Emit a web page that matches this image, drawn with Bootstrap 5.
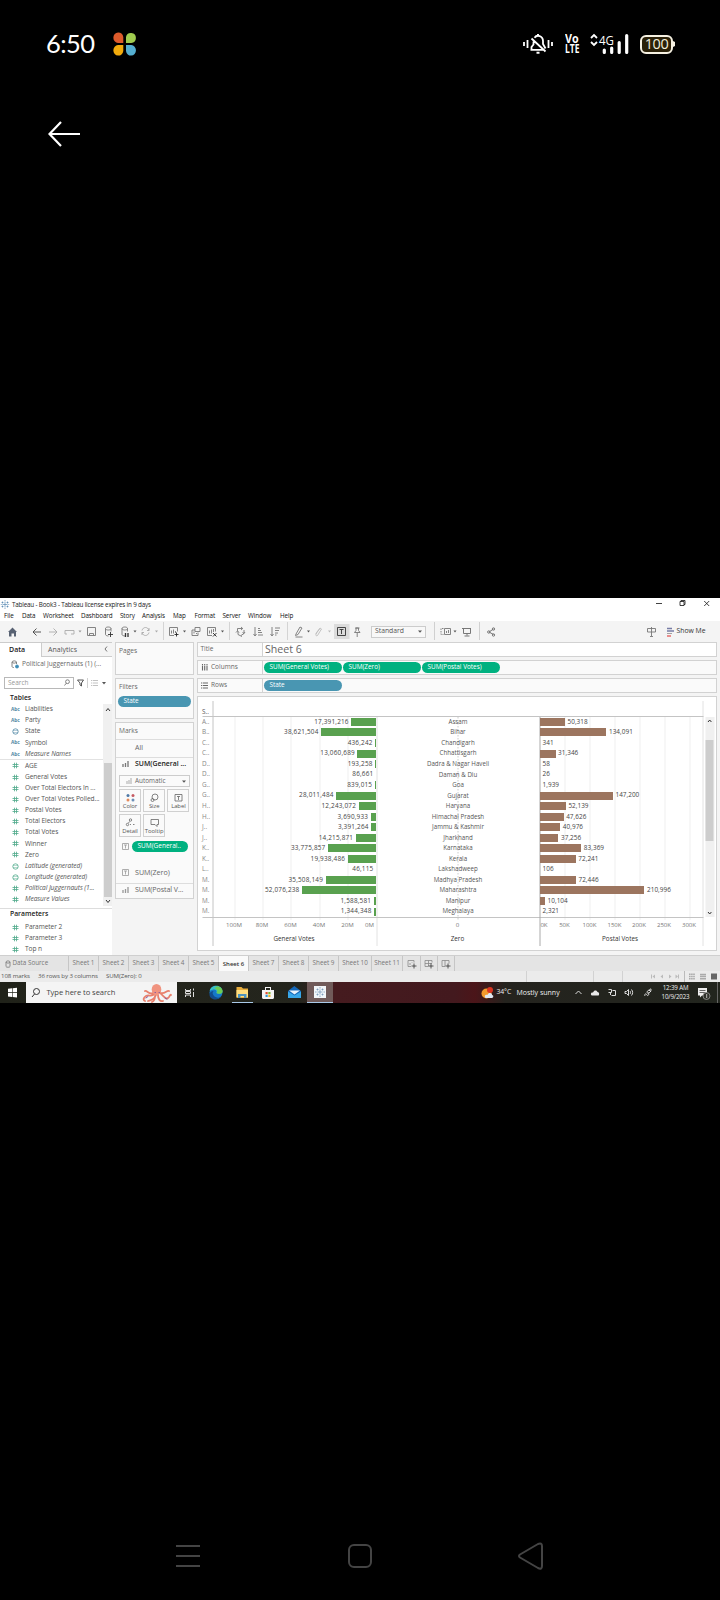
<!DOCTYPE html>
<html lang="en">
<head>
<meta charset="utf-8">
<meta name="viewport" content="width=device-width, initial-scale=1">
<title>Tableau - Book3</title>
<link href="https://cdn.jsdelivr.net/npm/bootstrap@5.3.0/dist/css/bootstrap.min.css" rel="stylesheet">
<style>
html,body{background:#000;margin:0}
body{width:720px;height:1600px;overflow:hidden;font-family:"Open Sans","Noto Sans",sans-serif;font-size:6.5px;line-height:1;color:#555}
svg{display:block;flex:none}
.phone{height:1600px}
.statusbar{height:88px;color:#fff;padding:0 45px 0 46px}
.clock{font:25.5px/1 Lato,sans-serif;letter-spacing:-.6px;width:67px}
.volte{font:bold 12.5px/10px "Open Sans",sans-serif;width:16px;margin-left:12px}
.volte span{display:block;transform-origin:0 50%}
.volte .vo{transform:scaleX(.86)}
.volte .lte{transform:scaleX(.68)}
.batt{width:33px;height:19px;border:2px solid #f6f1e2;border-radius:6px;background:#2a2008;font:14.5px/14px "Open Sans",sans-serif;color:#f3eddb;letter-spacing:-.5px;margin-left:10px}
.backrow{height:92px;padding-left:48px}
.photo{margin-top:418px;height:405px;background:#f4f4f4;overflow:hidden;white-space:nowrap}
.ttl{height:13px;background:#fff;color:#222;font-size:6.3px;letter-spacing:-.18px}
.ttl span{padding-top:1px}
.menus{height:10px;background:#fff;color:#111;font-size:6.3px;display:grid;align-items:center;padding-left:4px;grid-template-columns:18px 21px 38px 39px 22px 31px 21.5px 28px 25.5px 32px 20px;letter-spacing:-.1px}
.tools{height:21px}
.std{width:55px;height:12px;border:1px solid #ccc;background:#f8f8f8;padding:0 3px;font-size:6.8px}
.bodyrow{height:313px}
.side{width:112px;background:#fff;color:#555;font-size:6.6px}
.sidetabs{height:15px;font-size:7px}
.tab-a{width:41px;font-weight:600;color:#222;padding-left:9px;padding-bottom:1px;border-top:1px solid #ccc}
.tab-b{flex:1;background:#f4f4f4;border:1px solid #ccc;border-right:0;padding:0 4px 0 6px;letter-spacing:.02px}
.dsrow{height:15px;padding-left:11px;color:#666;font-size:6.5px}
.searchrow{height:22px;padding-left:4px;color:#999}
.searchbox{width:70px;height:12px;border:1px solid #b8b8b8;padding:0 3px;font-size:6.5px}
.hd{font-weight:600;color:#222;font-size:6.8px;padding-left:10px}
.fld{height:11.13px;padding-left:9px;letter-spacing:-.08px}
.fld .ic{width:16px;padding-left:2px;color:#4e86a3;font-size:4.8px;font-weight:bold}
.fld svg{margin-left:1px}
.fld.itl{font-style:italic}
.grp{border-bottom:1px solid #e2e2e2;height:56.5px}
.scr{width:9px;background:#f0f0f0;color:#444}
.thumb{background:#cdcdcd;width:8px}
.shelfcard{border:1px solid #d2d2d2;background:#fafafa;color:#666}
.cards{width:78.5px;margin-left:3px}
.cards .shelfcard{font-size:6.6px}
.pill{height:11px;border-radius:6px;background:#4996b2;color:#fff;font-size:6.4px;padding-left:5.5px;font-weight:500}
.pill.gr{background:#00b180}
.mbtn{width:22px;height:23px;border:1px solid #d0d0d0;font-size:5.9px;color:#555;letter-spacing:-.05px}
.mline{border-top:1px solid #ddd}
.shelf{height:15px;font-size:6.5px}
.shelf .lab{width:65.5px;border-right:1px solid #d2d2d2;height:100%;color:#666}
.viz{background:#fff;border:1px solid #d2d2d2;height:255px;padding:4px 0 0 4.5px}
.rw{height:10.54px;font-size:6.4px;color:#444}
.rw>.st{width:10.5px;padding-left:0;color:#888}
.rw>.gv{width:163.5px}
.rw>.nm{width:164px;font-size:6.2px;color:#555}
.rw>.pv{width:163px}
.rw b{display:block;height:8px;background:#59a14f}
.rw .pv b{background:#9c755f}
.num{padding:0 2.6px;letter-spacing:.04px}
.gv .num{letter-spacing:.2px}
.grid-svg{position:absolute;left:0;top:0;z-index:0}
.ax{font-size:6.1px;color:#777;height:16px;padding-top:1px}
.ax span{text-align:center}
.axt{font-size:6.3px;color:#333;height:12px}
.tabsrow{height:16px;background:#e4e4e4;border-top:1px solid #cfcfcf;color:#777;font-size:6.3px}
.tabsrow>div{border-right:1px solid #c6c6c6;height:15px;display:flex;align-items:center;justify-content:center}
.tabsrow>.on{background:#fafafa;color:#333;font-weight:600;font-size:6px}
.stat{height:11px;background:#ebebeb;color:#555;font-size:6.1px;letter-spacing:-.08px}
.task{height:21px;background:linear-gradient(90deg,#202219 0,#24251d 300px,#451b1f 334px,#43191e 455px,#4b1519 475px,#24231e 505px,#22251e 100%);color:#eee}
.tsearch{width:151px;background:#f4f4f4;color:#444;font-size:7.6px;letter-spacing:-.06px}
.act{width:26px;background:#705a59;border-bottom:1px solid #a9c9e8;height:21px}
.navb{height:90px}
</style>
</head>
<body>
<div class="phone d-flex flex-column">
 <div class="statusbar d-flex align-items-center">
  <div class="clock">6:50</div>
  <svg width="24" height="24" viewBox="0 0 24 24"><path fill="#dc5a2b" d="M10.300 11H5A5 5.300 0 1 1 10.300 5Z"/><path fill="#a0cb4f" d="M13 11V5a5 5 0 1 1 5.300 6Z"/><path fill="#f1ab0c" d="M10.300 13H5a5 5.300 0 1 0 5.300 6Z"/><path fill="#54aed0" d="M13 13h5.300a5 5.300 0 1 1-5.300 6Z"/></svg>
  <svg class="ms-auto" width="30" height="20" viewBox="0 0 30 20" fill="none" stroke="#fff"><path stroke-width="1.800" d="M1 8v4M4.500 6v8M25.500 6v8M29 8v4"/><path stroke-width="1.800" d="M7.500 15.800h14M8.500 15.500V13l2-2.500V7.500M11.500 3.800C14 0 20 2 20 7v3l2.500 4.500M8.500 4.500L22.500 17.500"/><path stroke-width="2" d="M13.500 18.800h3M14 1h2"/></svg>
  <div class="volte"><span class="vo">Vo</span><span class="lte">LTE</span></div>
  <svg style="margin-left:9px" width="40" height="22" viewBox="0 0 40 22"><path d="M1 6l3-3 3 3M1 10l3 3 3-3" transform="translate(0,-1)" fill="none" stroke="#fff" stroke-width="1.800"/><text x="9" y="12.200" font-family="Open Sans" font-size="12.500" textLength="15" lengthAdjust="spacingAndGlyphs" fill="#fff">4G</text><path stroke="#fff" stroke-width="3.200" stroke-linecap="round" d="M14.300 17v2.500M21.700 15v4.500M29.200 9.500v10M36.700 2.500v17"/></svg>
  <div class="batt d-flex align-items-center justify-content-center">100</div><svg width="2" height="6"><path fill="#f6f1e2" d="M0 0l2 1v4l-2 1z"/></svg>
 </div>
 <div class="backrow d-flex align-items-center">
  <svg width="33" height="26" viewBox="0 0 33 26" fill="none" stroke="#fff" stroke-width="2.200"><path d="M13 1L1.500 13 13 25M2 13h30"/></svg>
 </div>

 <div class="photo">
  <div class="ttl d-flex align-items-center">
   <svg width="12" height="13" viewBox="0 0 12 13" stroke="#3f78a8" stroke-width=".6" fill="none"><path d="M5 4v5M2.500 6.500h5M5 2v1.500M5 9.500V11M.8 6.500h1M8.200 6.500h1M2.500 3.500v2M7.500 3.500v2M2.500 7.500v2M7.500 7.500v2M1.500 4.500h2M6.500 4.500h2M1.500 8.500h2M6.500 8.500h2"/></svg>
   <span>Tableau - Book3 - Tableau license expires in 9 days</span>
   <svg class="ms-auto" width="66" height="13" viewBox="0 0 66 13" fill="none" stroke="#111" stroke-width=".8"><path d="M2 5.500h6M26 3.500h4v4h-4zM27 3.500v-1h4v4h-1M50.200 3l5 5M55.200 3l-5 5"/></svg>
  </div>
  <div class="menus"><span>File</span><span>Data</span><span>Worksheet</span><span>Dashboard</span><span>Story</span><span>Analysis</span><span>Map</span><span>Format</span><span>Server</span><span>Window</span><span>Help</span></div>
  <div class="tools d-flex align-items-center">
   <svg width="371" height="21" viewBox="0 0 371 21" fill="none" stroke="#777" stroke-width=".9">
    <path fill="#586273" stroke="none" d="M12.500 6.500L8 11h1v4.500h2.500v-3h2.500v3h2V11h1z"/>
    <path stroke="#444" d="M41 11h-8M36.500 7.500L33 11l3.500 3.500"/><path stroke="#aaa" d="M49 11h8M53.500 7.500L57 11l-3.500 3.500M67 13h-2v-3.500h9V13h-3"/>
    <path fill="#999" stroke="none" d="M78.500 9.500h3l-1.500 2z"/><path d="M87.500 6.500h8v8h-8zM89.500 14.500v-2h4v2"/>
    <path d="M105.500 7.500v6c0 1 2 1.500 3 1.500M105.500 7.500c0-2 5.500-2 5.500 0s-5.500 2-5.500 0M111 7.500v3"/><path stroke="#333" d="M110.500 11v5M108 13.500h5"/>
    <path d="M122 7.500v6c0 1 2 1.500 3 1.500M122 7.500c0-2 5.500-2 5.500 0s-5.500 2-5.500 0M127.500 7.500v3"/><path stroke="#333" stroke-width="1.300" d="M125.500 12v4M128 12v4"/>
    <path fill="#555" stroke="none" d="M133.500 9.500h3l-1.500 2z"/><path stroke="#aaa" d="M142 9.500c1-4 6-4 7 0M149 11.500c-1 4-6 4-7 0M149 7v2.500h-2M142 14v-2.500h2"/><path fill="#aaa" stroke="none" d="M155 9.500h3l-1.500 2z"/>
    <path stroke="#d0d0d0" d="M163.500 1v18M229.500 1v18M287.500 1v18"/>
    <path d="M174 14.500h-4.500v-8h8v4M171.500 12.500v-3M173.500 12.500v-4M175.500 12v-2"/><path stroke="#222" d="M176.500 11.500v4M174.500 13.500h4"/><path fill="#555" stroke="none" d="M183 9.500h3l-1.500 2z"/>
    <path d="M195 9h-3v5.500h6v-3M195 6.500h5v4h-5zM194 12.500v-2M196.500 13v-1"/><path d="M212 14.500h-4.500v-8h8v4M209.500 12.500v-3M211.500 12.500v-4M213.500 11v-3"/><path stroke="#222" d="M213 12l3.500 3.500M216.500 12L213 15.500"/><path fill="#555" stroke="none" d="M221 9.500h3l-1.500 2z"/>
    <path d="M237.500 10V7.500h5M241 6l1.700 1.500L241 9M244 9v3.500l-3 2M245 11l-1 1.500-1.500-1M242 15.500l-4-2v-3M236 11.500l1.500-1.500 1.500 1.500"/>
    <path d="M255 6v8.500M253.500 13l1.500 2 1.500-2M258 7.500h2M258 9.500h3M258 11.500h4M258 14h5"/><path d="M272 6v8.500M270.500 13l1.500 2 1.500-2M275 7h5M275 9.500h4M275 12h3M275 14h1.500"/>
    <path d="M296 13l4-7 2 1-4 6.500-2.500 1z"/><path d="M295.500 16h7"/><path fill="#555" stroke="none" d="M307 9.500h3l-1.500 2z"/><path stroke="#bbb" d="M316 13l4-6 1.500 1-4 6.500c-2 1-2-1-1-3l3-3.500"/><path fill="#bbb" stroke="none" d="M328 9.500h3l-1.500 2z"/>
    <path fill="#dcdcdc" stroke="none" d="M334 3h15.500v15H334z"/><path stroke="#333" d="M337.500 6.500h8v8h-8zM339.500 8.500h4M341.500 8.500v4.500"/><path d="M354.500 11.500h5.500l-1.500-2V7h-2.500v2.500zM357.200 12v4M355 7h4.500"/>
   </svg>
   <div class="std d-flex align-items-center justify-content-between"><span>Standard</span><svg width="4" height="3"><path fill="#555" d="M0 .5h4L2 2.700z"/></svg></div>
   <svg width="72" height="21" viewBox="426 0 72 21" fill="none" stroke="#777"><path stroke="#d0d0d0" d="M434.500 1v18M479.500 1v18"/><path stroke-width=".9" stroke-dasharray="1.500 1" d="M443.500 7.500h-2.500v6h2.500"/><path stroke-width=".9" d="M444.500 7.500h6v6h-6zM446.500 12v-2M448.500 12V9"/><path fill="#555" stroke="none" d="M453.500 9.500h3l-1.500 2z"/><path d="M462 7.500h9M463.500 7.500v5h7v-5M467 12.500v2M464.500 15h5"/><path d="M493.500 8l-4.500 3 4.500 2.500"/><circle cx="488.800" cy="11" r="1.200"/><circle cx="493.500" cy="8" r="1.200"/><circle cx="493.500" cy="14" r="1.200"/></svg>
   <svg class="ms-auto" width="31" height="21" viewBox="645 0 31 21" fill="none" stroke="#777" stroke-width=".9"><path d="M646.500 7.500h8v3.500h-8zM650.500 6v9M649 15.500h3"/><path stroke="#777ca5" stroke-width="1.500" d="M666 7.500h5M666 10h7"/><path stroke="#999" d="M666 12.500h5"/><path stroke="#e45756" stroke-width="1.300" d="M666 15h4"/></svg>
   <span style="width:43.500px;color:#333;font-size:6.8px">Show Me</span>
  </div>

  <div class="bodyrow d-flex">
   <div class="side d-flex flex-column">
    <div class="sidetabs d-flex"><div class="tab-a d-flex align-items-center">Data</div><div class="tab-b d-flex align-items-center justify-content-between"><span>Analytics</span><svg width="4" height="6" fill="none" stroke="#555" stroke-width=".8"><path d="M3 .5L1 3l2 2.500"/></svg></div></div>
    <div class="dsrow d-flex align-items-center"><svg width="11" height="9" viewBox="0 0 11 9" fill="none" stroke="#777" stroke-width=".9"><path d="M1 2c0-1.500 4.500-1.500 4.500 0S1 3.500 1 2v4.500c0 .8 1 1 2 1M5.500 2v2"/><circle cx="6" cy="6.500" r="1.500" fill="#3b8bb5" stroke="#3b8bb5"/></svg><span>Political Juggernauts (1) (...</span></div>
    <div class="searchrow d-flex align-items-center"><div class="searchbox d-flex align-items-center justify-content-between"><span>Search</span><svg width="6" height="7" fill="none" stroke="#666" stroke-width=".8"><circle cx="3.500" cy="2.700" r="1.900"/><path d="M2.300 4.200L.5 6.500"/></svg></div>
     <svg width="32" height="10" viewBox="-1 0 32 10" fill="none" stroke="#444" stroke-width=".9"><path d="M2.500 2h6L6.500 5v3l-1.500-1V5z"/><path stroke="#ccc" d="M12.500 0v10"/><path stroke="#bbb" stroke-dasharray="1 .7 6" d="M16 2.500h7M16 5h7M16 7.500h7"/><path fill="#555" stroke="none" d="M27 4h4l-2 2.500z"/></svg></div>
    <div class="hd d-flex align-items-center" style="height:9px">Tables</div>
    <div class="d-flex" style="height:203px;padding-top:1px"><div class="flex-fill" id="fields"></div>
     <div class="scr d-flex flex-column align-items-center"><svg width="6" height="5" style="margin-top:3px" fill="none" stroke="#333"><path d="M1 4l2-2.500L5 4"/></svg><div class="thumb" style="margin-top:51.500px;height:134px"></div><svg width="6" height="5" style="margin-top:2px" fill="none" stroke="#333"><path d="M1 1l2 2.500L5 1"/></svg></div></div>
    <div class="hd d-flex align-items-center mline" style="height:13px;margin-top:2px">Parameters</div>
    <div id="params" style="padding-top:1px"></div>
   </div>

   <div class="cards">
    <div class="shelfcard" style="height:33px;padding:5px 3px">Pages</div>
    <div class="shelfcard" style="height:41px;margin-top:3px;padding:5px 2px 0"><div style="padding-left:1px;height:12px">Filters</div><div class="pill d-flex align-items-center">State</div></div>
    <div class="shelfcard" style="height:177px;margin-top:3px">
     <div class="d-flex align-items-center" style="height:16px;padding-left:3px">Marks</div>
     <div class="mline d-flex align-items-center" style="height:18px;padding:0 0 2px 19px;font-size:7px">All</div>
     <div class="mline d-flex align-items-center" style="height:14px;padding:0 0 1px 6px;color:#222;font-weight:600;font-size:6.9px"><svg width="13" height="8" stroke="#777" stroke-width="1.300"><path d="M1 4v3M3.500 3v4M6 1v6"/></svg>SUM(General ...</div>
     <div class="d-flex align-items-center justify-content-between" style="height:12px;margin:4px 3px 0;border:1px solid #ccc;padding:0 3px 0 6px;font-size:6.4px"><span class="d-flex align-items-center"><svg width="9" height="7" stroke="#aaa"><path d="M1 3v3M3 2v4M5 0v6"/></svg>Automatic</span><svg width="4" height="3"><path fill="#555" d="M0 .5h4L2 2.700z"/></svg></div>
     <div class="d-flex flex-wrap" style="gap:2px 2.200px;padding:2px 2px 0 3px" id="mbtns"></div>
     <div class="d-flex align-items-center" style="margin:4px 4px 0"><svg width="12" height="7" viewBox="-1 0 12 7" fill="none" stroke="#999" stroke-width=".8"><path d="M1.500.5h6v6h-6zM3 2h3M4.500 2v3.500"/></svg><div class="pill gr d-flex align-items-center" style="width:56px;font-size:6.500px">SUM(General..</div></div>
     <div class="d-flex align-items-center" style="height:20px;margin-top:10.500px;padding-left:6px;font-size:7.1px"><svg width="13" height="7" fill="none" stroke="#999" stroke-width=".8"><path d="M.5.5h6v6h-6zM2 2h3M3.500 2v3.500"/></svg>SUM(Zero)</div>
     <div class="mline d-flex align-items-center" style="height:14px;padding-left:6px;font-size:7.1px;letter-spacing:-.07px"><svg width="13" height="8" stroke="#999" stroke-width="1.300"><path d="M1 4v3M3.500 3v4M6 1v6"/></svg>SUM(Postal V...</div>
    </div>
   </div>

   <div style="width:520px;margin-left:3px">
    <div class="shelfcard shelf d-flex align-items-center" style="background:#fff"><div class="lab d-flex align-items-center" style="padding-left:3px;background:#fafafa">Title</div><span style="font-size:10.600px;padding-left:2px;color:#666">Sheet 6</span></div>
    <div class="shelfcard shelf d-flex align-items-center" style="margin-top:3px;gap:1px"><div class="lab d-flex align-items-center" style="padding-left:3px"><svg width="10.500" height="7" stroke="#666" stroke-width="1.100"><path stroke-dasharray="1.200 .5 6" d="M1.500 0v6.500M3.700 0v6.500M6 0v6.500"/></svg>Columns</div><div class="pill gr d-flex align-items-center" style="width:78px">SUM(General Votes)</div><div class="pill gr d-flex align-items-center" style="width:78px">SUM(Zero)</div><div class="pill gr d-flex align-items-center" style="width:78px">SUM(Postal Votes)</div></div>
    <div class="shelfcard shelf d-flex align-items-center" style="margin-top:3px;gap:1px"><div class="lab d-flex align-items-center" style="padding-left:3px"><svg width="10.500" height="7" stroke="#666"><path stroke-dasharray="1 .7 6" d="M0 1h7M0 3.500h7M0 6h7"/></svg>Rows</div><div class="pill d-flex align-items-center" style="width:78px">State</div></div>
    <div class="viz position-relative" style="margin-top:3px">
     <svg class="grid-svg" width="518" height="253" viewBox="197.500 697 518 253" fill="none" stroke="#efefef">
      <path d="M234.500 717v203M262.500 717v203M290.500 717v203M319.500 717v203M347.500 717v203M564.500 717v203M589.500 717v203M614.500 717v203M639.500 717v203M664.500 717v203M689.500 717v203"/>
      <path stroke="#e2e2e2" d="M376.500 717v229M702.500 701v245"/><path stroke="#ccc" stroke-dasharray="1.500 1.500" d="M457.500 717v203"/>
      <path stroke="#c4c4c4" d="M202 716.500h501M202 917.500h501M212.500 701v245"/><path stroke="#aaa" d="M539.500 717v229"/>
      <path fill="#f0f0f0" stroke="none" d="M705 717h9v200h-9z"/><path fill="#cdcdcd" stroke="none" d="M705 740h8v101h-8z"/><path stroke="#333" d="M707.500 722l1.700-2 1.700 2M707.500 912l1.700 2 1.700-2"/>
     </svg>
     <div class="position-relative">
      <div style="height:15.700px;padding-top:7.500px;color:#555;font-size:6.400px">S..</div>
      <div id="rows"></div>
      <div class="ax d-flex align-items-center" id="axis"></div>
      <div class="axt d-flex align-items-center text-center"><span style="width:184px">General Votes</span><span style="width:143px">Zero</span><span style="width:182px">Postal Votes</span></div>
     </div>
    </div>
   </div>
  </div>

  <div class="tabsrow d-flex" id="tabs"></div>
  <div class="stat d-flex align-items-center"><span style="width:38px;padding-left:1px">108 marks</span><span style="width:68px">36 rows by 3 columns</span><span>SUM(Zero): 0</span>
   <svg class="ms-auto" width="194" height="11" viewBox="526 0 194 11" fill="none" stroke="#d2d2d2"><path d="M526.500 0v11M593.500 0v11M622.500 0v11"/><path stroke="#bbb" d="M684.500 0v11M651.500 3.500v4M678.500 3.500v4"/><path fill="#bbb" stroke="none" d="M655 3.500v4l-2.500-2zM663 3.500v4l-2.500-2zM669 3.500v4l2.500-2zM675.500 3.500v4l2.500-2z"/><path stroke="#aaa" stroke-width="1.400" stroke-dasharray="1.600 .5" d="M689 3.300h6M689 5.500h6M689 7.700h6"/><path stroke="#aaa" stroke-width="1.400" d="M700 3.500h6M700 5.500h6M700 7.700h6"/><path fill="#666" stroke="none" d="M711 2.500h6v6h-6z"/></svg></div>
  <div class="task d-flex align-items-center">
   <svg width="26" height="21"><path fill="#fff" d="M8 6.800l4-.5v4H8zM12.600 6.200l4.400-.5v4.600h-4.400zM8 10.900h4v4l-4-.5zM12.600 10.900H17v4.600l-4.400-.5z"/></svg>
   <div class="tsearch d-flex align-items-center h-100"><svg width="20.500" height="12" viewBox="0 0 20.500 12" fill="none" stroke="#333"><circle cx="10.500" cy="4.500" r="3"/><path d="M8.500 7L6 10"/></svg>Type here to search
    <svg class="ms-auto me-1" width="32" height="20" viewBox="0 0 32 20" fill="none" stroke="#e8806c" stroke-width="1.800" stroke-linecap="round"><path d="M14 10c-3 5-6 1-9 3-3 2-3 4-1 5M15 12c-2 5-5 5-8 6M17 12c0 4 2 7 5 6M19 10c4 3 6 8 9 4 1-2 2-3 2-2M12 10C8 12 6 7 4 8M20 10c4 1 6-3 8-2M14 13c0 4-1 5-3 6"/><ellipse cx="15.500" cy="6.500" rx="4.800" ry="5.500" fill="#f0937f" stroke="none"/><path stroke="#8a5b9e" stroke-width="1" d="M14 9.500h.5M18 9.500h.5M7 13.500l-2 1.500M24 15l2 1"/></svg></div>
   <svg width="130" height="21" viewBox="177 0 130 21"><path stroke="#ddd" fill="none" d="M185.500 7v1.500h5V7M185.500 9.500h5v2h-5zM185.500 15v-2h5V15M193.500 6.500v2M193.500 10v5"/>
    <circle cx="216" cy="10.500" r="6.500" fill="#1678c8"/><path fill="#39c0c6" d="M209.700 9c1-7 12-7 12.800 0 0 3-4 3.500-6 2 1-4-3-4.500-6.800-2z"/><path fill="#6ccd57" d="M217 4.200c4 .5 6 3 5.500 6-1 2-5 2-6 .8 1.500-2 1-3.500-2-4.500z"/><path fill="#124c8d" d="M212.500 11c1 4.500 5 5.500 8.500 4-3 4-11 3-11.500-2 0-3 2-4 4-4z"/>
    <path fill="#e9ae3d" d="M236.500 5h5l1.500 1.500h5V16h-11.500z"/><path fill="#ffdf80" d="M236.500 8H248v7h-11.500z"/><path fill="#4e93bd" d="M238 12h8.500v4H244v-2h-3.500v2H238z"/><path fill="#a9c9e8" d="M232 20h21v1h-21z"/>
    <path fill="#f4f4f4" d="M262 8h12v7.500c0 1-1 1.500-2 1.500h-8c-1 0-2-.5-2-1.500zM265 8V5h6v3h-1V6h-4v2z"/><path fill="#e34f31" d="M265.500 10h2.200v2.200h-2.200z"/><path fill="#7bb62c" d="M268.300 10h2.200v2.200h-2.200z"/><path fill="#2a9bd8" d="M265.500 12.800h2.200V15h-2.200z"/><path fill="#f1b52a" d="M268.300 12.800h2.200V15h-2.200z"/>
    <path fill="#1568b8" d="M288 9l6.300-5L301 9v7h-13z"/><path fill="#38a7e8" d="M288 9.500l6.500 4 6.500-4V16h-13z"/><path fill="#e9f5fc" d="M289 8.500h11l-5.500 4z"/></svg>
   <div class="act d-flex align-items-center justify-content-center"><svg width="12" height="12" viewBox="0 0 12 12"><path fill="#f1f5f8" d="M0 0h12v12H0z"/><path stroke="#6d93b4" stroke-width=".7" fill="none" d="M6 3.500v5M3.500 6h5M6 1v1.500M6 9.500V11M1 6h1.500M9.500 6H11M3.500 2.500v2M8.500 2.500v2M3.500 7.500v2M8.500 7.500v2M2.500 3.500h2M7.500 3.500h2M2.500 8.500h2M7.500 8.500h2"/></svg></div>
   <svg class="ms-auto" width="15.500" height="14" viewBox="0.500 0 15.500 14"><circle cx="6" cy="7.500" r="5" fill="#f39a2c"/><path fill="#dfe7f2" d="M5 12c-2-3 1-4 2-3 1-3 5-2 4.500 0 2 0 1.500 3 0 3z"/><circle cx="9.500" cy="4" r="3" fill="#dc3522"/></svg>
   <span style="width:20px;font-size:6.800px;letter-spacing:-.1px">34°C</span><span style="width:54.500px;font-size:7px">Mostly sunny</span>
   <svg width="87" height="21" viewBox="571 0 87 21" fill="none" stroke="#ddd"><path d="M575.500 12l3-3 3 3"/><path fill="#e8e8e8" stroke="none" d="M592 13.500c-2-1-1-3.500 1-3 1-3 4-2.500 4.500-.5 2 0 2 3 1 3.500z"/><path d="M608.500 7.500h3v3h-3M610.500 11v2M612.500 8.500h3v5h-4"/><path d="M625 9.500h1.500l2-2v6l-2-2H625zM630 9c.7 1 .7 2 0 3M631.500 7.500c1.500 2 1.500 4 0 6"/><path d="M645 14c-1-2 1-3 2-1s3-2 1-2-1-2 1-3 2-2 2 0-2 3-3 3M649 8l2 2"/></svg>
   <div class="text-center" style="width:35px;font-size:6.200px;line-height:9px;letter-spacing:-.150px;padding-bottom:1px">12:39 AM<br>10/9/2023</div>
   <svg width="27" height="21" viewBox="693 0 27 21"><path fill="#eee" d="M698 6h9v7.500h-5l-2 2v-2h-2z"/><path stroke="#444" stroke-width=".8" d="M699.500 8.500h6M699.500 10.500h6"/><circle cx="706.500" cy="14" r="3.500" fill="#30322c" stroke="#999" stroke-width=".8"/><path stroke="#ddd" stroke-width=".8" d="M706.700 12v4"/><path stroke="#777" stroke-width=".8" d="M717.500 0v21"/></svg>
  </div>
 </div>

 <div class="navb mt-auto"><svg width="720" height="90" viewBox="0 1510 720 90" fill="none" stroke="#444" stroke-width="2"><path d="M176 1546h24M176 1556h24M176 1566h24"/><rect x="349" y="1545" width="22" height="22" rx="5"/><path stroke-linejoin="round" d="M520 1554.500l18-10.500q4-1.500 4 2v20q0 4-4 2l-18-10.500q-2-1.500 0-3z"/></svg></div>
</div>

<script src="https://cdn.jsdelivr.net/npm/bootstrap@5.3.0/dist/js/bootstrap.bundle.min.js"></script>
<script>
const hash='<svg width="7" height="7" fill="none" stroke="#4fa98a" stroke-width=".8"><path d="M2.500.7v5.600M4.500.7v5.600M.5 2.500h6M.5 4.500h6"/></svg>';
const globe=c=>`<svg width="7" height="7" fill="none" stroke="${c}" stroke-width=".8"><circle cx="3.500" cy="3.500" r="2.700"/><path stroke-width=".4" d="M1 2.500h5M1 4.500h5"/></svg>`;
const ic={a:'Abc',h:hash,z:hash.replace('<path d="','<path d="M-1 3.500h1.500'),g:globe('#4e86a3'),G:globe('#4fa98a')};
const fld=([k,t,i])=>`<div class="fld d-flex align-items-center ${i?'itl':''}"><span class="ic fst-normal">${ic[k]}</span>${t}</div>`;
const dims=[['a','Liabilities'],['a','Party'],['g','State'],['a','Symbol'],['a','Measure Names',1]];
const meas=[['h','AGE'],['h','General Votes'],['h','Over Total Electors In ...'],['h','Over Total Votes Polled...'],['h','Postal Votes'],['h','Total Electors'],['h','Total Votes'],['h','Winner'],['z','Zero'],['G','Latitude (generated)',1],['G','Longitude (generated)',1],['h','Political Juggernauts (1...',1],['h','Measure Values',1]];
fields.innerHTML='<div class="grp">'+dims.map(fld).join('')+'</div>'+meas.map(fld).join('');
params.innerHTML=[['h','Parameter 2'],['h','Parameter 3'],['h','Top n']].map(fld).join('');
const mb={Color:'<g stroke="none"><circle cx="3" cy="2.500" r="1.500" fill="#4e79a7"/><circle cx="8" cy="2.500" r="1.500" fill="#c65a62"/><circle cx="3" cy="7" r="1.500" fill="#e58a5b"/><circle cx="8" cy="7" r="1.500" fill="#6b8fb8"/></g>',Size:'<circle cx="6" cy="4" r="3"/><circle cx="3.500" cy="7" r="1.500"/>',Label:'<path d="M2 1.500h7v6.500H2zM4 3.500h3M5.500 3.500V7"/>',Detail:'<circle cx="5.500" cy="2" r="1.200"/><circle cx="2.500" cy="6.500" r="1.200"/><path d="M5 6.500h1M8 6.500h1.500M4.500 3.500l-1 1.500"/>',Tooltip:'<path d="M2 1.500h7.500v5H8v2l-2-2H2z"/>'};
mbtns.innerHTML=Object.entries(mb).map(([t,s])=>`<div class="mbtn d-flex flex-column align-items-center"><svg width="11" height="10" style="margin-top:2.500px" fill="none" stroke="#666" stroke-width=".8">${s}</svg><span style="margin-top:1.500px">${t}</span></div>`).join('');
const data=[['A..','Assam',17391216,50318],['B..','Bihar',38621504,134091],['C..','Chandigarh',436242,341],['C..','Chhattisgarh',13060689,31346],['D..','Dadra &amp; Nagar Haveli',193258,58],['D..','Daman &amp; Diu',86661,26],['G..','Goa',839015,1939],['G..','Gujarat',28011484,147200],['H..','Haryana',12243072,52139],['H..','Himachal Pradesh',3690933,47626],['J..','Jammu &amp; Kashmir',3391264,40976],['J..','Jharkhand',14215871,37256],['K..','Karnataka',33775857,83369],['K..','Kerala',19938486,72241],['L..','Lakshadweep',46115,106],['M.','Madhya Pradesh',35508149,72446],['M.','Maharashtra',52076238,210996],['M.','Manipur',1588581,10104],['M.','Meghalaya',1344348,2321]];
const f=n=>n.toLocaleString('en-US');
rows.innerHTML=data.map(([s,n,g,p])=>`<div class="rw d-flex align-items-center"><span class="st">${s}</span><div class="gv d-flex justify-content-end align-items-center"><span class="num">${f(g)}</span><b style="width:${g<150000?0:Math.max(.8,g*1.42e-6).toFixed(2)}px"></b></div><span class="nm text-center">${n}</span><div class="pv d-flex align-items-center"><b style="width:${p<2500?0:(p*.000495).toFixed(2)}px"></b><span class="num">${f(p)}</span></div></div>`).join('');
// axis ticks: [label, centre x inside the plot]
let ax=0;
axis.innerHTML=[['100M',32],['80M',60],['60M',88.5],['40M',117],['20M',145.5],['0M',167.5],['0',255.5],['0K',342],['50K',362.5],['100K',387.5],['150K',412.5],['200K',437],['250K',462],['300K',487]].map(([t,c])=>{const w=t=='0K'?14:18,m=c-w/2-ax;ax=c+w/2;return `<span style="flex:none;width:${w}px;margin-left:${m}px">${t}</span>`}).join('');
const plus=s=>`<svg width="10" height="10" fill="none" stroke="#888" stroke-width=".8"><path d="${s}"/><path stroke="#333" d="M7 4.500v5M4.500 7h5"/></svg>`;
const tb=[['<svg width="7" height="8" fill="none" stroke="#777" stroke-width=".8" style="margin-right:.5px"><path d="M1 2c0-1.500 4-1.500 4 0S1 3.500 1 2v4.500c0 1 4 1 4 0V2"/></svg>Data Source',69]];
for(let i=1;i<=11;i++)tb.push(['Sheet '+i,i==10?33:31-(i<11),i==6]);
tb.push([plus('M4 7.500H1v-6h6v2M3 6V4M5 4v-.5'),18],[plus('M4 7.500H1v-6h7v2M1 4.500h7M4.500 1.500v6'),17],[plus('M4 7.500H1v-6h3v6M4 1.500h4v3'),17]);
tabs.innerHTML=tb.map(([t,w,o],i)=>`<div class="${o?'on':''}" style="width:${w}px;${i==0?'justify-content:flex-start;padding-left:5px':''}">${t}</div>`).join('');
</script>
</body>
</html>
